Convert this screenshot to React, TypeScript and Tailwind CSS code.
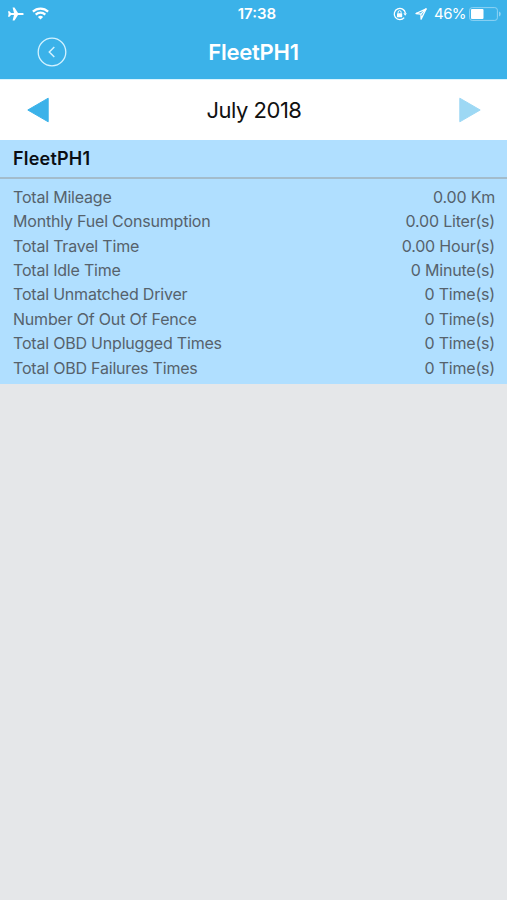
const STATS = [
  { label: "Total Mileage", value: "0.00 Km" },
  { label: "Monthly Fuel Consumption", value: "0.00 Liter(s)" },
  { label: "Total Travel Time", value: "0.00 Hour(s)" },
  { label: "Total Idle Time", value: "0 Minute(s)" },
  { label: "Total Unmatched Driver", value: "0 Time(s)" },
  { label: "Number Of Out Of Fence", value: "0 Time(s)" },
  { label: "Total OBD Unplugged Times", value: "0 Time(s)" },
  { label: "Total OBD Failures Times", value: "0 Time(s)" },
];

function StatusBar() {
  return (
    <div className="grid h-[27px] grid-cols-[1fr_auto_1fr] items-center pl-2 pr-[6px] text-white">
      <div className="flex items-center gap-2">
        {/* Airplane mode */}
        <svg width="16" height="14" viewBox="0 0 16 14" fill="currentColor">
          <path d="M15.8 7c0 .7-.8 1.1-1.8 1.1H10L6.500 13.500H4.600L6 8.100H3L1.500 9.800H0L.6 7 0 4.200h1.500L3 5.900h3L4.600.5h1.900L10 5.900h4c1 0 1.800.4 1.800 1.100z" />
        </svg>
        <svg width="17" height="13" viewBox="0 0 17 13" fill="none" stroke="currentColor" strokeWidth="2.200">
          <path d="M.9 4.600a11 11 0 0 1 15.200 0" />
          <path d="M3.700 7.600a7 7 0 0 1 9.600 0" />
          <path d="M8.500 12.600 5.900 10a3.700 3.700 0 0 1 5.200 0z" fill="currentColor" stroke="none" />
        </svg>
      </div>

      <span className="pl-[5px] text-[15px] font-semibold leading-none">17:38</span>

      <div className="flex items-center justify-end">
        {/* Rotation lock */}
        <svg className="mr-2" width="14" height="14" viewBox="0 0 14 14" fill="none" stroke="currentColor" strokeWidth="1.3">
          <path d="M11.200 10.600a5.600 5.600 0 1 1 1.200-4.400" />
          <path d="M10.400 6.200h3.500l-1.700 2.500z" fill="currentColor" stroke="none" />
          <rect x="4" y="6.200" width="5.200" height="4" rx=".5" fill="currentColor" stroke="none" />
          <path d="M5.100 6.400V5.200a1.500 1.500 0 0 1 3 0v1.200" strokeWidth="1" />
        </svg>
        <svg className="mr-[7px]" width="12" height="12" viewBox="0 0 12 12" fill="none" stroke="currentColor" strokeWidth="1.300" strokeLinejoin="round">
          <path d="M11.200.8 1 5.500l4.900.6.2 5z" />
          <path d="M11.200.8 5.900 6.100" />
        </svg>
        <span className="mr-[3px] text-[15px] leading-none tracking-[-0.6px]">46%</span>
        <svg width="32" height="14" viewBox="0 0 32 14" fill="none">
          <rect x=".6" y=".6" width="27.800" height="12.800" rx="2.600" stroke="#8fd3f4" strokeWidth="1" />
          <rect x="2" y="2" width="12.500" height="10" rx="1" fill="#fff" />
          <path d="M30 4.600c1.200.4 1.700 1.200 1.700 2.400S31.200 9 30 9.400z" fill="#8fd3f4" />
        </svg>
      </div>
    </div>
  );
}

function NavBar() {
  return (
    <div className="grid h-[52px] grid-cols-[1fr_auto_1fr] items-center px-[37px] pb-[2px] text-white">
      <button className="w-[30px]" aria-label="Back">
        <svg width="30" height="30" viewBox="0 0 30 30" fill="none" stroke="#d3f2ff">
          <circle cx="15" cy="15" r="13.800" strokeWidth="1.300" />
          <path d="m17.300 10-5 5 5 5" strokeWidth="1.500" />
        </svg>
      </button>
      <h1 className="text-[22px] font-semibold leading-none tracking-[-0.25px]">FleetPH1</h1>
    </div>
  );
}

function MonthPicker() {
  return (
    <div className="flex h-[61px] items-center justify-between border-t border-[#d9f5ff] bg-white pl-[27px] pr-[26px]">
      <button aria-label="Previous month">
        <svg width="22" height="26" viewBox="0 0 22 26" fill="#3bb2e9" stroke="#3bb2e9" strokeLinejoin="round">
          <path d="M.8 13 21.200 1.200v23.600z" />
        </svg>
      </button>
      <span className="text-[22px] leading-none tracking-[-0.5px] text-[#111]">July 2018</span>
      <button aria-label="Next month">
        <svg width="22" height="26" viewBox="0 0 22 26" fill="#9dd8f4" stroke="#9dd8f4" strokeLinejoin="round">
          <path d="M21.200 13 .8 1.200v23.600z" />
        </svg>
      </button>
    </div>
  );
}

export default function App() {
  return (
    <div className="min-h-screen w-full bg-[#e5e7e9] font-['Inter','Liberation_Sans',sans-serif]">
      <header className="bg-[#3bb2e9]">
        <StatusBar />
        <NavBar />
      </header>

      <MonthPicker />

      <section className="bg-[#b0dfff]">
        <h2 className="flex h-[39px] items-center border-b-2 border-[#a3bccb] px-[13px] text-[18px] font-semibold tracking-[0.2px] text-[#0a0d12]">
          FleetPH1
        </h2>
        <ul className="pb-[4px] pt-[5.6px]">
          {STATS.map((stat) => (
            <li
              key={stat.label}
              className="flex h-[24.4px] items-center justify-between pl-[13px] pr-3 text-[16px] leading-none tracking-[-0.2px] text-[#56626c]"
            >
              <span>{stat.label}</span>
              <span>{stat.value}</span>
            </li>
          ))}
        </ul>
      </section>
    </div>
  );
}
